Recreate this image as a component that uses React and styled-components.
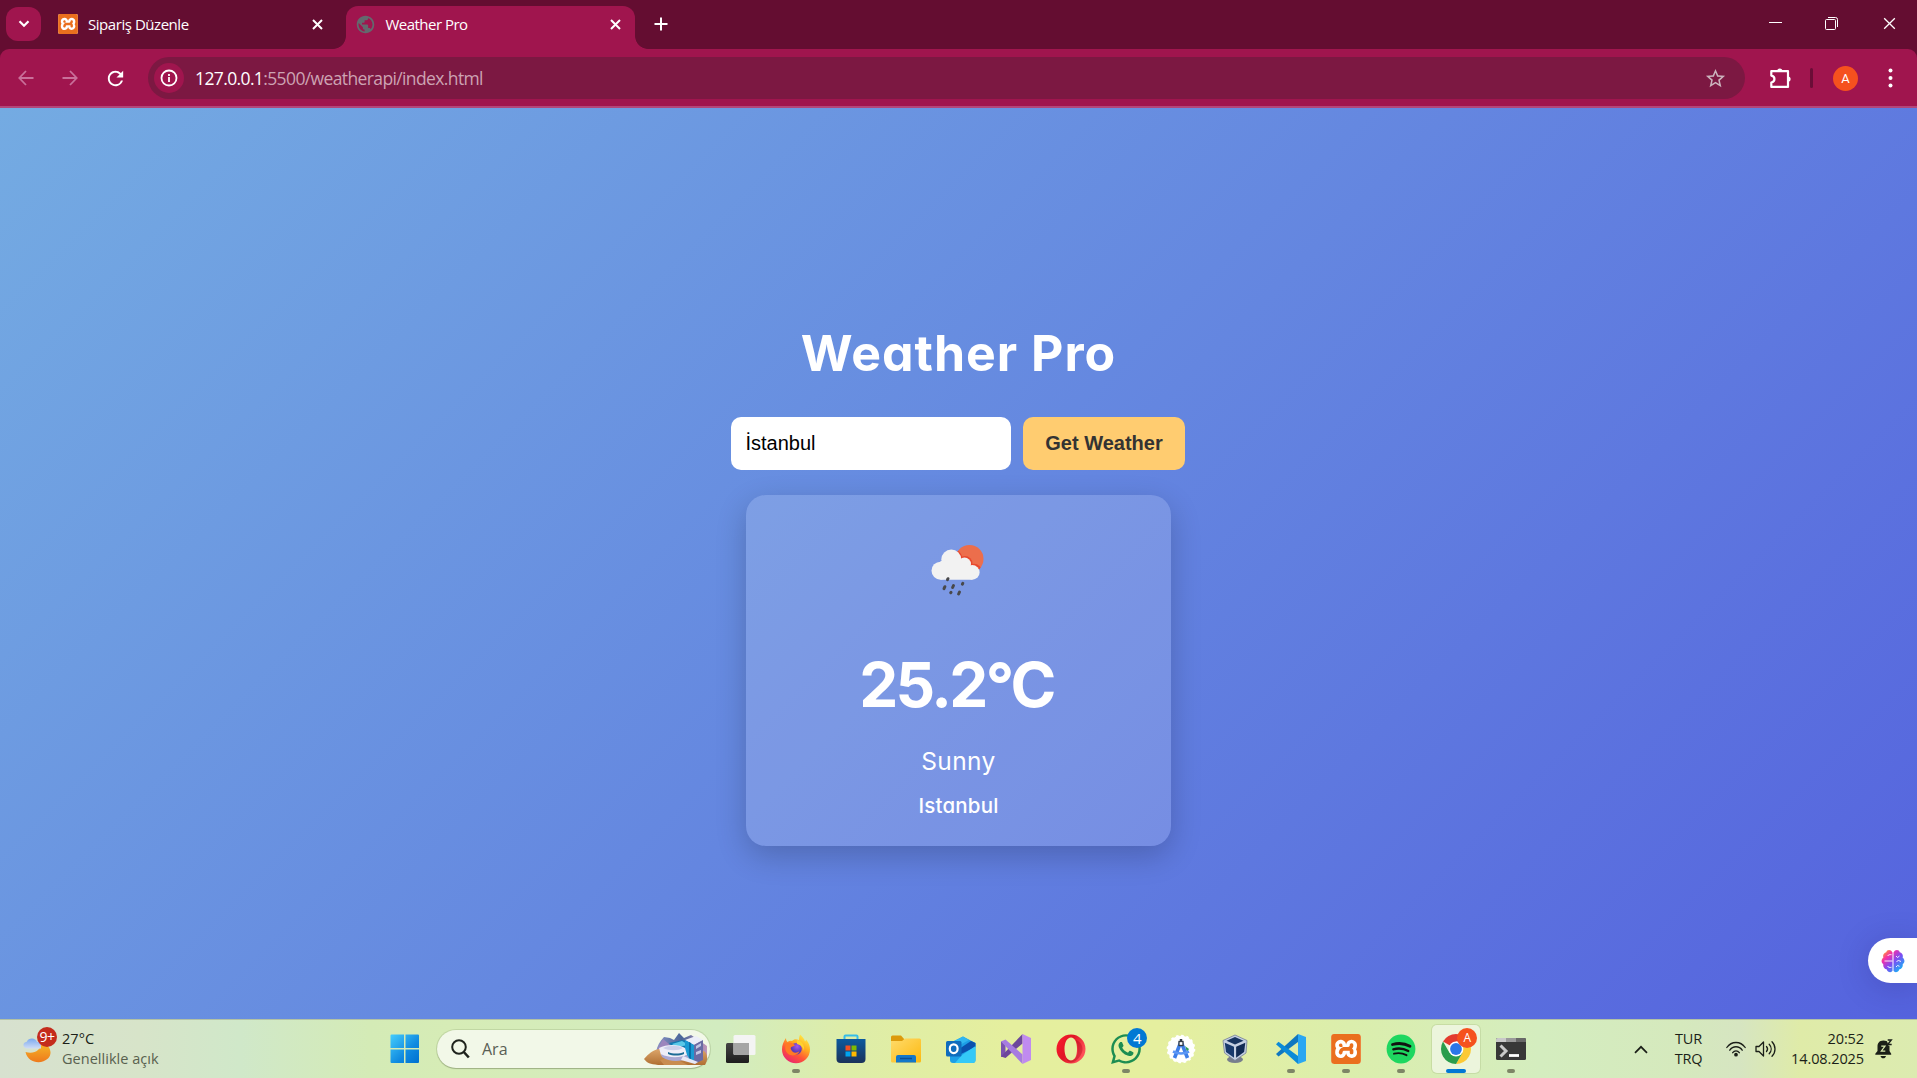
import React from "react";
import styled, { createGlobalStyle, css } from "styled-components";
import { SiXampp } from "react-icons/si";
import { FaWhatsapp } from "react-icons/fa";
import { MdPublic, MdStarBorder, MdRefresh } from "react-icons/md";

const Global = createGlobalStyle`
  *, *::before, *::after { box-sizing: border-box; }
  html, body { margin: 0; padding: 0; overflow: hidden; }
  body { font-family: "Open Sans", "Noto Sans", sans-serif; }
  svg { display: block; flex: none; }
`;

const Screen = styled.div`
  width: 1917px;
  height: 1078px;
  display: flex;
  flex-direction: column;
  background: #640d31;
`;

/* ---------- browser chrome ---------- */

const TabStrip = styled.div`
  height: 49px;
  display: flex;
  align-items: flex-start;
  padding-left: 6px;
  background: #640d31;
  color: #fff;
`;

const TabSearch = styled.div`
  width: 35px;
  height: 34px;
  margin-top: 7px;
  border-radius: 12px;
  background: #a0154e;
  display: grid;
  place-items: center;
`;

const Tab = styled.div`
  width: ${(p) => (p.$active ? 289 : 305)}px;
  height: 43px;
  margin-top: 6px;
  padding: ${(p) => (p.$active ? "0 14px 7px 10px" : "0 23px 7px 17px")};
  display: flex;
  align-items: center;
  position: relative;
  font-size: 15px;
  ${(p) =>
    p.$active &&
    css`
      background: #a0154e;
      border-radius: 12px 12px 0 0;
      &::before,
      &::after {
        content: "";
        position: absolute;
        bottom: 0;
        width: 13px;
        height: 13px;
      }
      &::before {
        left: -13px;
        background: radial-gradient(circle at 0 0, transparent 12.5px, #a0154e 13.2px);
      }
      &::after {
        right: -13px;
        background: radial-gradient(circle at 100% 0, transparent 12.5px, #a0154e 13.2px);
      }
    `}
`;

const TabTitle = styled.span`
  margin-left: ${(p) => p.$gap}px;
  flex: 1;
  white-space: nowrap;
  line-height: 20px;
  letter-spacing: ${(p) => p.$track}px;
`;

const NewTab = styled.div`
  margin: 17px 0 0 19px;
`;

const WindowButtons = styled.div`
  margin: 17px 21px 0 auto;
  display: flex;
  gap: 43px;
  svg:last-child {
    margin-left: 2px;
  }
`;

const Toolbar = styled.div`
  height: 59px;
  display: flex;
  align-items: center;
  padding: 1px 20px 0 17px;
  background: #a0154e;
  border-bottom: 2px solid #b2467a;
  border-radius: 9px 9px 0 0;
  color: #fff;
`;

const NavButton = styled.div`
  width: 18px;
  height: 22px;
  margin-right: ${(p) => p.$gap || 27}px;
  display: grid;
  place-items: center;
  color: ${(p) => (p.$dim ? "#c9709a" : "#fff")};
`;

const AddressBar = styled.div`
  width: 1597px;
  height: 42px;
  margin-left: -4px;
  border-radius: 21px;
  padding: 0 18px 0 6px;
  background: #7c1842;
  display: flex;
  align-items: center;
`;

const SiteInfo = styled.div`
  width: 30px;
  height: 30px;
  border-radius: 50%;
  background: #a0154e;
  display: grid;
  place-items: center;
`;

const Url = styled.span`
  flex: 1;
  margin-left: 11px;
  font-size: 17.5px;
  line-height: 24px;
  letter-spacing: -0.62px;
  color: #cda3b3;
  b {
    font-weight: 400;
    color: #fff;
  }
`;

const Separator = styled.div`
  width: 3px;
  height: 20px;
  margin: 0 20px 0 18px;
  border-radius: 2px;
  background: #6b0d37;
`;

const Avatar = styled.div`
  width: 25px;
  height: 25px;
  border-radius: 50%;
  background: #f5511e;
  font: 400 13px/25px Roboto, sans-serif;
  text-align: center;
`;

/* ---------- page ---------- */

const Page = styled.main`
  flex: 1;
  position: relative;
  overflow: hidden;
  display: flex;
  flex-direction: column;
  align-items: center;
  background: linear-gradient(135deg, #74abe2, #5563de);
  color: #fff;
  font-family: Inter, sans-serif;
  font-feature-settings: "cv11" 1;
`;

const Title = styled.h1`
  margin: 207px 0 0;
  font-size: 50px;
  line-height: 76px;
  font-weight: 700;
  letter-spacing: ${(p) => p.$track}px;
  white-space: nowrap;
`;

const SearchRow = styled.div`
  margin: 26px 2px 0 0;
  display: flex;
  gap: 12px;
`;

const CityInput = styled.input`
  width: 280px;
  height: 53px;
  border: 0;
  border-radius: 10px;
  padding: 0 15px;
  font: 20px "Liberation Sans", Arial, sans-serif;
  color: #000;
  background: #fff;
  outline: none;
`;

const WeatherButton = styled.button`
  width: 162px;
  height: 53px;
  border: 0;
  border-radius: 10px;
  padding: 0 0 0 1px;
  font: bold 20px "Liberation Sans", Arial, sans-serif;
  color: #333;
  background: #ffcc70;
`;

const Card = styled.section`
  width: 425px;
  height: 351px;
  margin-top: 25px;
  border-radius: 20px;
  padding-top: 35px;
  display: flex;
  flex-direction: column;
  align-items: center;
  background: rgba(255, 255, 255, 0.15);
  box-shadow: 0 10px 31px rgba(0, 0, 0, 0.2);
`;

const Temperature = styled.div`
  margin: 30px 4px 0 0;
  font-size: 62px;
  line-height: 90px;
  font-weight: 650;
  letter-spacing: ${(p) => p.$track}px;
`;

const Line = styled.div`
  margin-top: ${(p) => p.$top}px;
  font-size: ${(p) => p.$size}px;
  line-height: 36px;
  font-weight: ${(p) => p.$weight};
  letter-spacing: ${(p) => p.$track}px;
`;

const SideWidget = styled.div`
  position: absolute;
  right: 0;
  top: 830px;
  width: 49px;
  height: 45px;
  padding-left: 13px;
  border-radius: 23px 0 0 23px;
  background: #fff;
  box-shadow: 0 4px 30px rgba(40, 30, 120, 0.25);
  display: flex;
  align-items: center;
`;

/* ---------- taskbar ---------- */

const Taskbar = styled.footer`
  height: 59px;
  display: flex;
  align-items: center;
  border-top: 1px solid #b3c2a4;
  background: linear-gradient(
    90deg,
    #d7e1cf 0,
    #d7e4c9 140px,
    #d0e8c9 240px,
    #d4ebb6 370px,
    #d6ecb6 450px,
    #d2ecc0 720px,
    #deeda8 850px,
    #e5ef9e 1010px,
    #e5ef9f 1160px,
    #dbeeac 1350px,
    #d4edbf 1540px,
    #d5e9bd 1680px,
    #d6e5c1 1740px,
    #dfeba8 1800px,
    #dcebb0 1917px
  );
  color: #1b1f18;
  font-size: 14.5px;
`;

const Weather = styled.div`
  width: 382px;
  padding-left: 23px;
  display: flex;
  align-items: center;
`;

const IconWrap = styled.div`
  position: relative;
  width: 30px;
  height: 30px;
`;

const Badge = styled.span`
  position: absolute;
  top: ${(p) => p.$top}px;
  left: ${(p) => p.$left}px;
  width: 20px;
  height: 20px;
  border-radius: 50%;
  background: ${(p) => p.$color};
  color: #fff;
  font-size: ${(p) => p.$size || 14}px;
  line-height: 20px;
  text-align: center;
  letter-spacing: -0.5px;
`;

const WeatherText = styled.div`
  margin-left: 9px;
  line-height: 20px;
  white-space: nowrap;
  letter-spacing: 0.03px;
  small {
    display: block;
    font-size: inherit;
    color: #59614f;
  }
`;

const StartButton = styled.div`
  width: 55px;
  padding-left: 8px;
`;

const SearchBox = styled.div`
  width: 273px;
  height: 38px;
  border-radius: 19px;
  padding: 0 2px 0 14px;
  display: flex;
  align-items: center;
  background: #f2f8e8;
  box-shadow: 0 0 0 1px rgba(140, 160, 110, 0.28), 0 1px 1px rgba(80, 90, 60, 0.35);
`;

const SearchLabel = styled.span`
  flex: 1;
  margin-left: 12px;
  font-size: 16px;
  color: #5a5f55;
`;

const Apps = styled.div`
  display: flex;
  margin-left: 3px;
`;

const AppCell = styled.div`
  width: 55px;
  height: 58px;
  padding: 5px 3px 5px 4px;
  position: relative;
`;

const AppTile = styled.div`
  height: 48px;
  width: 48px;
  border-radius: 5px;
  display: grid;
  place-items: center;
  background: ${(p) => (p.$active ? "#ecf5dc" : "transparent")};
  box-shadow: ${(p) => (p.$active ? "0 0 0 1px rgba(150,170,110,.25)" : "none")};
`;

const Indicator = styled.span`
  position: absolute;
  bottom: 5px;
  left: ${(p) => (p.$active ? 18 : 24)}px;
  width: ${(p) => (p.$active ? 20 : 8)}px;
  height: 4px;
  border-radius: 2px;
  background: ${(p) => (p.$active ? "#0078d4" : "#7d8566")};
`;

const XamppPlate = styled.div`
  width: ${(p) => p.$size}px;
  height: ${(p) => p.$size}px;
  border-radius: ${(p) => (p.$size > 24 ? 4 : 2)}px;
  background: #fff;
  display: grid;
  place-items: center;
`;

const Tray = styled.div`
  margin-left: auto;
  padding-right: 24px;
  display: flex;
  align-items: center;
`;

const TrayText = styled.div`
  width: ${(p) => p.$width}px;
  text-align: ${(p) => p.$align};
  line-height: 20px;
  white-space: nowrap;
  letter-spacing: ${(p) => p.$track}px;
`;

const Space = styled.div`
  width: ${(p) => p.$w}px;
`;

/* ---------- icons ---------- */

const Cross = ({ size = 11, w = 2 }) => (
  <svg width={size} height={size} viewBox="0 0 11 11" stroke="#fff" strokeWidth={w}>
    <path d="M1 1l9 9M10 1l-9 9" />
  </svg>
);

const Arrow = ({ flip }) => (
  <svg width="16" height="16" viewBox="0 0 16 16" fill="none" stroke="currentColor" strokeWidth="1.8" transform={flip ? "scale(-1 1)" : undefined}>
    <path d="M15.5 8H1.5M8 1L1.3 8 8 15" />
  </svg>
);

const Puzzle = () => (
  <svg width="25" height="25" viewBox="0 0 25 25" fill="none" stroke="#fff" strokeWidth="2.200" strokeLinejoin="round">
    <path d="M4.300 5.200H21v15.700H4.300v-4.400c4.200-.6 4.200-6.300 0-6.900z" />
    <path d="M10.200 5.200a2.600 2.600 0 0 1 5.200 0zM21 10.400a2.600 2.600 0 0 1 0 5.200z" fill="#fff" stroke="none" />
  </svg>
);

const Brain = () => (
  <svg width="24" height="24" viewBox="0 0 24 24">
    <defs>
      <linearGradient id="brain" gradientUnits="userSpaceOnUse" x1="3" y1="2" x2="21" y2="21">
        <stop offset="0" stopColor="#ff9a2e" /><stop offset=".25" stopColor="#f52fa8" /><stop offset=".55" stopColor="#7f4bf2" /><stop offset="1" stopColor="#12b8f7" />
      </linearGradient>
    </defs>
    <path
      d="M11.500 3.500C10 0 5.800.3 5.300 3.300 2.800 3.800 1.500 6.300 2.400 8.500 0 10.500 0 13.600 2.300 15.200 1.800 18 3.600 20 5.600 20.300c.8 3.200 4.900 3.800 5.900 1.500zM12.500 3.500C14 0 18.200.3 18.700 3.300c2.500.5 3.800 3 2.900 5.200 2.400 2 2.400 5.100.1 6.700.5 2.800-1.300 4.800-3.300 5.100-.8 3.200-4.900 3.800-5.900 1.500z"
      fill="url(#brain)"
    />
    <path d="M3.500 12h8M6.500 7c1-1.300 2.300-1.600 4-1.300M6.500 17c.5 1.300 2.300 1.800 4 1.300M15 7l1.500 1.500L18.500 7M15.500 12.500l2-1 2.500 1M15 18l1.500-1.500 2 .8" fill="none" stroke="#fff" strokeWidth=".9" />
  </svg>
);

const Xampp = ({ size }) => (
  <XamppPlate $size={size}>
    <SiXampp size={size} color="#ea6f1e" />
  </XamppPlate>
);

const RainIcon = () => (
  <svg width="81" height="80" viewBox="0 0 81 80">
    <defs><clipPath id="sun"><circle cx="51.500" cy="29" r="14" /></clipPath></defs>
    <circle cx="51.500" cy="29" r="14" fill="#ec6e4c" />
    <g fill="#e8482e" clipPath="url(#sun)">
      <circle cx="33.500" cy="29.500" r="11" />
      <circle cx="47" cy="33.500" r="7.500" />
      <circle cx="56" cy="41.500" r="7.800" />
    </g>
    <g fill="#f2f2f2">
      <circle cx="33.300" cy="29.500" r="10" />
      <circle cx="22.500" cy="40.700" r="9" />
      <circle cx="46.500" cy="34" r="6.500" />
      <circle cx="54.300" cy="42.400" r="7.300" />
      <path d="M22.500 31H46l8.300 10v8.700H22.500z" />
    </g>
    <g stroke="#48484a" strokeWidth="3" strokeLinecap="round">
      <path d="M30 48.700l-.5 1M26.900 56.700l-.9 2M35.500 55.500l-.9 2M44.800 53.400l-.4.8M33 62.400l-.3.3M41.500 62l-.9 2" />
    </g>
  </svg>
);

const MoonCloud = () => (
  <svg width="30" height="30" viewBox="0 0 30 30">
    <defs>
      <linearGradient id="moon" x1="0" y1="0" x2="0" y2="1"><stop offset="0" stopColor="#f6bb28" /><stop offset="1" stopColor="#ee7a1d" /></linearGradient>
      <linearGradient id="cloud" x1="0" y1="0" x2="0" y2="1"><stop offset="0" stopColor="#7ba9ef" /><stop offset="1" stopColor="#cfdcf5" /></linearGradient>
    </defs>
    <path d="M2.500 18c8 2.500 15.500-1 16-10 9 3 11.500 11.500 6.500 16.500C18 31 5 29 2.500 18z" fill="url(#moon)" />
    <path d="M4.500 14.500C-.5 14-1 8.500 3.500 8c2-5 9.500-4.500 10.500 0h4v6.500z" fill="url(#cloud)" />
  </svg>
);

const StartIcon = () => (
  <svg width="30" height="30" viewBox="0 0 30 30">
    <defs>
      <linearGradient id="win" x1="0" y1="0" x2="1" y2="1"><stop offset="0" stopColor="#45cdfc" /><stop offset=".6" stopColor="#108ae0" /><stop offset="1" stopColor="#0070d0" /></linearGradient>
    </defs>
    <path fill="url(#win)" d="M1.500 .5H14V14H.5V1.500a1 1 0 0 1 1-1zM15.500 .5H28a1 1 0 0 1 1 1V14H15.500zM.5 15.500H14V29H1.500a1 1 0 0 1-1-1zM15.500 15.500H29V28a1 1 0 0 1-1 1H15.500z" />
  </svg>
);

const SearchArt = () => (
  <svg width="64" height="34" viewBox="0 0 64 34">
    <defs>
      <linearGradient id="hill" x1="0" y1="0" x2="1" y2="0"><stop offset="0" stopColor="#8a93c4" /><stop offset=".5" stopColor="#4a6699" /><stop offset="1" stopColor="#c095ba" /></linearGradient>
      <linearGradient id="sand" x1="0" y1="0" x2="0" y2="1"><stop offset="0" stopColor="#dca66b" /><stop offset="1" stopColor="#b06f33" /></linearGradient>
    </defs>
    <path d="M12 20c1-6 4-11 8-15l6 1 4 2 5-7 5 5 7-3 9 6 7 5v12z" fill="url(#hill)" />
    <path d="M12 20l7-13 6 5 2 8z" fill="#9c86bd" />
    <path d="M0 27c4-5 9-9 15-10l45 2c4 3 4 9 1 14H14C6 32 3 31 0 27z" fill="url(#sand)" />
    <path d="M16 28c8-3 14-2 20 1l8 4H20z" fill="#c98d50" />
    <path d="M25 11l14-3 6 2v9l-10 3z" fill="#1279b0" />
    <path d="M28 12l10-3 7 4-13 2z" fill="#59c8e8" />
    <path d="M41 8l11-4 7 4-9 5z" fill="#eceef9" />
    <path d="M41 8l9 5v17l-9-4z" fill="#1a9ad3" /><path d="M45 10l2 1v17l-2-1z" fill="#0a6fa8" />
    <path d="M50 13l9-5v20l-9 4z" fill="#6a6ba4" /><path d="M52 14l5-3v3l-5 3zM52 20l5-2v3l-5 2z" fill="#c4c6e3" />
    <path d="M15 16c7-4 20-4 26 0l2 7c-7 4-20 4-26 0z" fill="#eeeef8" />
    <path d="M17 22c7 4 19 4 26 1l2 3c-8 4-20 4-27-1z" fill="#a9a8d4" />
    <path d="M19 16c6-3 15-3 20 0-5 3-14 3-20 0z" fill="#cdd0ea" />
    <path d="M24 20c5 2 11 2 16 0v2c-5 2-11 2-16 0z" fill="#1c6c96" />
    <path d="M39 24l15 6-3 2-14-4z" fill="#e8e8f6" />
  </svg>
);

const TaskView = () => (
  <svg width="30" height="30" viewBox="0 0 30 30">
    <defs><linearGradient id="tv" x1="0" y1="0" x2="0" y2="1"><stop offset="0" stopColor="#444" /><stop offset="1" stopColor="#1d1d1d" /></linearGradient></defs>
    <rect x="0" y="9" width="23" height="20" rx="1.500" fill="url(#tv)" />
    <rect x="7.500" y="1" width="22" height="20" rx="1.500" fill="#f4f4f4" />
    <path d="M7.500 9H23v12H9a1.500 1.500 0 0 1-1.500-1.500z" fill="#a5a5a5" />
  </svg>
);

const Firefox = () => (
  <svg width="30" height="30" viewBox="0 0 30 30">
    <defs>
      <linearGradient id="ff" x1=".8" y1="0" x2=".2" y2="1"><stop offset="0" stopColor="#fff14a" /><stop offset=".35" stopColor="#ffad1f" /><stop offset=".65" stopColor="#ff5436" /><stop offset="1" stopColor="#e61f7a" /></linearGradient>
      <radialGradient id="ffp" cx=".6" cy=".3"><stop offset="0" stopColor="#a257ed" /><stop offset="1" stopColor="#5a3bb5" /></radialGradient>
    </defs>
    <path d="M18 6c0-3 1-5 1-5.500 2 2 4.500 4 5 7 1-1 1-1.500 1-2C28 9 29 12 29 15.500A14 13.800 0 0 1 1 15.500C1 11 2.500 8 5 4c0 2 .5 3 1.500 4C8 7 9.500 6.500 11 7c2-2 4-2.500 7-1z" fill="url(#ff)" />
    <circle cx="15" cy="14.800" r="5.800" fill="url(#ffp)" />
    <path d="M5 9c4-1.500 7 0 9 2.500-1.500 1-3.500.7-4.500 2.500 1 5 6 6 9 3-2 6-12 6-14-1-.6-3 0-5 .5-7z" fill="#ff7a24" />
    <path d="M16 6c5 1 8 5 7 11-1-4-3-6-7-7z" fill="#ffd12e" />
  </svg>
);

const Store = () => (
  <svg width="30" height="30" viewBox="0 0 30 30">
    <defs><linearGradient id="st" x1="0" y1="0" x2="0" y2="1"><stop offset="0" stopColor="#0c5a9e" /><stop offset="1" stopColor="#1b325a" /></linearGradient></defs>
    <path d="M8.500 7V2.500a1 1 0 0 1 1-1h11a1 1 0 0 1 1 1V7" fill="none" stroke="#35bde9" strokeWidth="2" />
    <path d="M.5 5h29v20a4 4 0 0 1-4 4h-21a4 4 0 0 1-4-4z" fill="url(#st)" />
    <path d="M9.500 11.500h5v5h-5z" fill="#f25022" /><path d="M15.500 11.500h5v5h-5z" fill="#7fba00" />
    <path d="M9.500 17.500h5v5h-5z" fill="#00a4ef" /><path d="M15.500 17.500h5v5h-5z" fill="#ffb900" />
  </svg>
);

const Folder = () => (
  <svg width="30" height="30" viewBox="0 0 30 30">
    <defs><linearGradient id="fo" x1="0" y1="0" x2="1" y2="1"><stop offset="0" stopColor="#ffdb6b" /><stop offset="1" stopColor="#fcb910" /></linearGradient></defs>
    <path d="M0 3a1.500 1.500 0 0 1 1.500-1.500H10l3.500 4V9H0z" fill="#dc9a0b" />
    <path d="M0 7h11l3-2.500h14.500A1.500 1.500 0 0 1 30 6v21a1.500 1.500 0 0 1-1.500 1.500h-27A1.500 1.500 0 0 1 0 27z" fill="url(#fo)" />
    <path d="M5 28.500V23a2 2 0 0 1 2-2h16a2 2 0 0 1 2 2v5.500z" fill="#1377c9" />
    <path d="M9 24.500h12" stroke="#0a4e96" strokeWidth="1.500" />
  </svg>
);

const Outlook = () => (
  <svg width="30" height="30" viewBox="0 0 30 30">
    <path d="M4 9L17 2.500 29.500 9v17a3 3 0 0 1-3 3H7a3 3 0 0 1-3-3z" fill="#1d9fe6" />
    <path d="M4 9L17 2.500l6 3.500L10 13z" fill="#30b6f0" />
    <path d="M13 15l12-8 4.500 2v4L15 20z" fill="#0a50ad" />
    <path d="M16 21l13.500-9v14a3 3 0 0 1-3 3H9z" fill="#34c9f7" />
    <rect x="0" y="7" width="15.500" height="15.500" rx="1.500" fill="#0f6cbd" />
    <ellipse cx="7.700" cy="14.700" rx="3.900" ry="4.400" fill="none" stroke="#fff" strokeWidth="2.200" />
  </svg>
);

const VisualStudio = () => (
  <svg width="30" height="30" viewBox="0 0 30 30">
    <path d="M0 7.500l4.500 1v13L0 23z" fill="#7a52b0" />
    <path d="M0 22.500L21.500 0v9.500L4.500 24z" fill="#6c479b" />
    <path d="M0 7.500l4.500-2L21.500 20.500V30z" fill="#a67be0" />
    <path d="M21.500 0L30 4v22l-8.500 4z" fill="#c08bf0" />
  </svg>
);

const Opera = () => (
  <svg width="30" height="30" viewBox="0 0 30 30">
    <defs><linearGradient id="op" x1="0" y1="0" x2="1" y2=".5"><stop offset="0" stopColor="#ff1b2d" /><stop offset=".5" stopColor="#e01525" /><stop offset="1" stopColor="#ff5058" /></linearGradient></defs>
    <path fillRule="evenodd" d="M15 .5a14.500 14.500 0 1 0 0 29a14.500 14.500 0 1 0 0-29zM15 3.500c4 0 6 5 6 11.500s-2 11.500-6 11.500-6.500-5-6.500-11.500S11 3.500 15 3.500z" fill="url(#op)" />
    <path d="M10 24c3 3.500 7 3 9.500 0 3-3.500 3-14 0-18 3 .5 7 4 7 9s-5 13-11.500 13.500C12 28 10.500 26.500 10 24z" fill="#a70014" opacity=".35" />
  </svg>
);

const AndroidStudio = () => (
  <svg width="30" height="30" viewBox="0 0 30 30">
    <circle cx="15" cy="15" r="13.300" fill="#fff" />
    <circle cx="15" cy="15" r="13.300" fill="none" stroke="#fff" strokeWidth="2" strokeDasharray="2.600 2.600" />
    <path d="M19 12l4 3-2 3z" fill="#2f9e5a" />
    <path d="M8.500 24L14 10h2l5.500 14" fill="none" stroke="#3f7fe8" strokeWidth="3.600" />
    <path d="M7 17.500c5 2.500 11 2.500 16 0" fill="none" stroke="#5b96f5" strokeWidth="2.600" />
    <path d="M15 5v3" stroke="#333b45" strokeWidth="2.500" /><rect x="13" y="7.500" width="4" height="4" fill="#fff" stroke="#333b45" strokeWidth="1.300" />
  </svg>
);

const VirtualBox = () => (
  <svg width="30" height="30" viewBox="0 0 30 30">
    <g transform="translate(1 0)">
      <ellipse cx="13" cy="25.500" rx="8" ry="3.500" fill="#777e8d" />
      <path d="M1 6.500L13 1l12 5.500-1 12.500L13 26.500 2.500 19z" fill="#c4cfe2" stroke="#737f96" strokeWidth=".8" />
      <path d="M4.500 6.800L13 3l8.500 3.800L13 10.500z" fill="#173460" />
      <path d="M2.800 8.800l9.200 3.900v11L4 18z" fill="#17396c" /><path d="M23.300 8.800l-9.200 3.900v11l8-5.700z" fill="#112a53" />
    </g>
  </svg>
);

const VsCode = () => (
  <svg width="30" height="30" viewBox="0 0 30 30">
    <path d="M0 20l2.500 2.500L22 8V0z" fill="#0f77c0" />
    <path d="M0 10.200L2.500 7.700 22 22v8z" fill="#0b8bd8" />
    <path d="M22 0l8 3v24l-8 3z" fill="#2aa7f2" />
  </svg>
);

const Spotify = () => (
  <svg width="30" height="30" viewBox="0 0 30 30">
    <circle cx="15" cy="15" r="14.400" fill="#1ed760" />
    <g fill="none" stroke="#111" strokeLinecap="round">
      <path d="M6.500 10.500c6-1.700 12.500-1 17.500 1.800" strokeWidth="2.800" />
      <path d="M7.300 15.300c5-1.400 10.500-.8 15 1.700" strokeWidth="2.300" />
      <path d="M8 19.700c4.300-1.100 8.600-.6 12.500 1.500" strokeWidth="1.900" />
    </g>
  </svg>
);

const Chrome = () => (
  <svg width="30" height="30" viewBox="0 0 30 30">
    <path d="M15 15L2.010 7.500A15 15 0 0 1 27.990 7.500H15z" fill="#e33b2e" />
    <path d="M15 15L27.990 7.500A15 15 0 0 1 15 30l6.500-11.250z" fill="#fcc934" />
    <path d="M15 15l6.500 3.750L15 30A15 15 0 0 1 2.010 7.500L8.500 18.750z" fill="#2a9d4c" />
    <circle cx="15" cy="15" r="7.400" fill="#fff" /><circle cx="15" cy="15" r="5.900" fill="#2b76e8" />
  </svg>
);

const Terminal = () => (
  <svg width="30" height="30" viewBox="0 0 30 30">
    <rect x="0" y="4" width="30" height="22" rx="1.500" fill="#383838" />
    <path d="M1.500 4H10v4H0V5.500A1.500 1.500 0 0 1 1.500 4z" fill="#c9c9c9" /><path d="M10 4h10v4H10z" fill="#9a9a9a" /><path d="M20 4h8.500A1.500 1.500 0 0 1 30 5.500V8H20z" fill="#686868" />
    <path d="M4.500 11.500l5.500 5.500-5.500 5.500" fill="none" stroke="#c9c9c9" strokeWidth="3" /><path d="M13 21.500h10" stroke="#fff" strokeWidth="2.800" />
  </svg>
);

const Wifi = () => (
  <svg width="20" height="16" viewBox="0 0 20 16" fill="none" stroke="#1b1f18" strokeWidth="1.300" strokeLinecap="round">
    <path d="M.8 6.500C5.500-.2 14.500-.2 19.200 6.500M3.800 9.200c3-4.600 9.400-4.600 12.400 0M6.700 11.700c1.700-2.400 4.900-2.400 6.600 0" />
    <circle cx="10" cy="13.700" r="1.200" fill="#1b1f18" />
  </svg>
);

const Speaker = () => (
  <svg width="21" height="18" viewBox="0 0 21 18" fill="none" stroke="#1b1f18" strokeWidth="1.300" strokeLinecap="round" strokeLinejoin="round">
    <path d="M1 6.500h3L8.500 2v14L4 11.500H1zM11.500 6.500c1.300 1.500 1.300 3.500 0 5M14.200 4.200c2.600 2.800 2.600 6.800 0 9.600M17 1.800c4 4 4 10.400 0 14.400" />
  </svg>
);

const Bell = () => (
  <svg width="18" height="20" viewBox="0 0 18 20">
    <path d="M8.500 1.500c4.500 0 6 3 6 6v4.500l1.700 2.800v1H.3v-1L2.500 12V7.500c0-3 1.500-6 6-6zM5.500 17h5.500c-.4 1.600-1.400 2.300-2.700 2.300S5.900 18.600 5.500 17z" fill="#1b1f18" />
    <path d="M11.500 0H18v6.800h-4.500z" fill="#dcebb0" />
    <path d="M12.700 1h3.600l-3.600 4.500h4" fill="none" stroke="#1b1f18" strokeWidth="1.400" />
    <path d="M6.300 7.200h3.700l-3.700 5h4" fill="none" stroke="#dcebb0" strokeWidth="1.200" />
  </svg>
);

const apps = [
  { id: "taskview", icon: <TaskView /> },
  { id: "firefox", icon: <Firefox />, running: true },
  { id: "store", icon: <Store /> },
  { id: "files", icon: <Folder /> },
  { id: "outlook", icon: <Outlook /> },
  { id: "vs", icon: <VisualStudio /> },
  { id: "opera", icon: <Opera /> },
  { id: "whatsapp", icon: <FaWhatsapp size={34} color="#1c8d52" style={{ margin: "-2px" }} />, running: true, badge: ["4", "#0078d4", 15] },
  { id: "android", icon: <AndroidStudio /> },
  { id: "vbox", icon: <VirtualBox /> },
  { id: "vscode", icon: <VsCode />, running: true },
  { id: "xampp", icon: <Xampp size={30} />, running: true },
  { id: "spotify", icon: <Spotify />, running: true },
  { id: "chrome", icon: <Chrome />, running: true, active: true, badge: ["A", "#f5511e", 12] },
  { id: "terminal", icon: <Terminal />, running: true },
];

export default function App() {
  return (
    <Screen>
      <Global />
      <TabStrip>
        <TabSearch>
          <svg width="12" height="8" viewBox="0 0 12 8" fill="none" stroke="#fff" strokeWidth="2.200"><path d="M1.500 1.300L6 5.800l4.500-4.500" /></svg>
        </TabSearch>
        <Tab>
          <Xampp size={20} />
          <TabTitle $gap={10} $track={-0.45}>Sipariş Düzenle</TabTitle>
          <Cross />
        </Tab>
        <Tab $active>
          <MdPublic size={21} color="#63696e" style={{ margin: "0 -1px" }} />
          <TabTitle $gap={10.5} $track={-0.52}>Weather Pro</TabTitle>
          <Cross />
        </Tab>
        <NewTab>
          <svg width="14" height="14" viewBox="0 0 14 14" stroke="#fff" strokeWidth="2"><path d="M7 .5v13M.5 7h13" /></svg>
        </NewTab>
        <WindowButtons>
          <svg width="13" height="13" viewBox="0 0 13 13" stroke="#fff"><path d="M0 5.500h13" /></svg>
          <svg width="13" height="13" viewBox="0 0 13 13" fill="none" stroke="#fff"><rect x=".5" y="2.500" width="10" height="10" rx="1" /><path d="M3 .5h7.500a2 2 0 0 1 2 2V10" /></svg>
          <Cross size={13} w={1.1} />
        </WindowButtons>
      </TabStrip>
      <Toolbar>
        <NavButton $dim $gap={26}><Arrow /></NavButton>
        <NavButton $dim $gap={25}><Arrow flip /></NavButton>
        <NavButton $gap={30}><MdRefresh size={23} /></NavButton>
        <AddressBar>
          <SiteInfo>
            <svg width="18" height="18" viewBox="0 0 18 18" fill="none" stroke="#fff" strokeWidth="1.800"><circle cx="9" cy="9" r="7.500" /><path d="M9 8v5M9 5v2" /></svg>
          </SiteInfo>
          <Url><b>127.0.0.1</b>:5500/weatherapi/index.html</Url>
          <MdStarBorder size={23} color="#cbb4bd" />
        </AddressBar>
        <Space $w={22} />
        <Puzzle />
        <Separator />
        <Avatar>A</Avatar>
        <Space $w={30} />
        <svg width="5" height="20" viewBox="0 0 5 20" fill="#fff"><circle cx="2.500" cy="2.500" r="2" /><circle cx="2.500" cy="10" r="2" /><circle cx="2.500" cy="17.500" r="2" /></svg>
      </Toolbar>

      <Page>
        <Title $track={1}>Weather Pro</Title>
        <SearchRow>
          <CityInput defaultValue="İstanbul" />
          <WeatherButton>Get Weather</WeatherButton>
        </SearchRow>
        <Card>
          <RainIcon />
          <Temperature $track={-2.6}>25.2°C</Temperature>
          <Line $top={13} $size={24.500} $weight={400} $track={0.4}>Sunny</Line>
          <Line $top={9} $size={20.500} $weight={500} $track={0.2}>Istanbul</Line>
        </Card>
        <SideWidget>
          <Brain />
        </SideWidget>
      </Page>

      <Taskbar>
        <Weather>
          <IconWrap>
            <MoonCloud />
            <Badge $top={-7} $left={14} $color="#c42b1c">9+</Badge>
          </IconWrap>
          <WeatherText>27°C<small>Genellikle açık</small></WeatherText>
        </Weather>
        <StartButton><StartIcon /></StartButton>
        <SearchBox>
          <svg width="19" height="20" viewBox="0 0 19 20" fill="none" stroke="#1f231c" strokeWidth="2"><circle cx="8" cy="8" r="6.800" /><path d="M12.800 13l5 5.500" strokeWidth="2.600" /></svg>
          <SearchLabel>Ara</SearchLabel>
          <SearchArt />
        </SearchBox>
        <Apps>
          {apps.map((a) => (
            <AppCell key={a.id}>
              <AppTile $active={a.active}>
                <IconWrap>
                  {a.icon}
                  {a.badge && <Badge $top={-6} $left={16} $color={a.badge[1]} $size={a.badge[2]}>{a.badge[0]}</Badge>}
                </IconWrap>
              </AppTile>
              {a.running && <Indicator $active={a.active} />}
            </AppCell>
          ))}
        </Apps>
        <Tray>
          <svg width="14" height="9" viewBox="0 0 14 9" fill="none" stroke="#1b1f18" strokeWidth="1.700"><path d="M1 7.800l6-6 6 6" /></svg>
          <Space $w={26} />
          <TrayText $width={29} $align="center" $track={-0.2}>TUR<br />TRQ</TrayText>
          <Space $w={23} />
          <Wifi />
          <Space $w={9} />
          <Speaker />
          <Space $w={15} />
          <TrayText $width={73} $align="right" $track={-0.1}>20:52<br />14.08.2025</TrayText>
          <Space $w={11} />
          <Bell />
        </Tray>
      </Taskbar>
    </Screen>
  );
}
